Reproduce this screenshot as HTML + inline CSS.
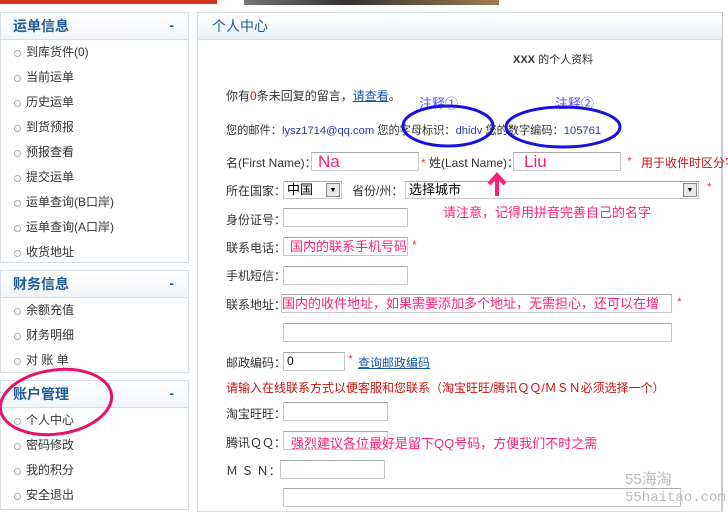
<!DOCTYPE html>
<html><head><meta charset="utf-8"><style>
*{margin:0;padding:0;box-sizing:border-box}
body{width:728px;height:506px;overflow:hidden;background:#fff;position:relative;font-family:"Liberation Sans","Noto Sans CJK SC",sans-serif;font-size:12px;color:#333}
.a{position:absolute;white-space:nowrap}
.panel{position:absolute;left:0;width:189px;border:1px solid #d6dee6;background:#fff}
.ph{height:27px;background:linear-gradient(#fff,#f0f4f8);border-bottom:1px solid #d6dee6;color:#1f5b94;font-weight:bold;font-size:14px;line-height:27px;padding-left:12px;position:relative}
.ph:after{content:"-";position:absolute;right:14px;top:-1px;color:#1f5b94}
.it{height:25px;line-height:25px;padding-left:25px;position:relative;font-size:12px;color:#333}
.it:before{content:"";position:absolute;left:13px;top:10px;width:5px;height:5px;border:1px solid #aaa;border-radius:50%}
.in{position:absolute;border:1px solid #c8c8c8;border-top-color:#a8a8a8;background:#fff;height:19px}
.lb{position:absolute;white-space:nowrap;font-size:12px;color:#333}
.pk{color:#ff1f7a}
</style></head><body>
<div class="a" style="left:0;top:0;width:217px;height:4px;background:#d8341c"></div>
<div class="a" style="left:244px;top:0;width:255px;height:5px;background:linear-gradient(90deg,#777,#333 40%,#a07a50)"></div>

<div class="panel" style="top:12px;height:251px">
<div class="ph">运单信息</div>
<div class="it">到库货件(0)</div><div class="it">当前运单</div><div class="it">历史运单</div><div class="it">到货预报</div><div class="it">预报查看</div><div class="it">提交运单</div><div class="it">运单查询(B口岸)</div><div class="it">运单查询(A口岸)</div><div class="it">收货地址</div>
</div>
<div class="panel" style="top:270px;height:103px">
<div class="ph">财务信息</div>
<div class="it">余额充值</div><div class="it">财务明细</div><div class="it">对 账 单</div>
</div>
<div class="panel" style="top:380px;height:130px">
<div class="ph">账户管理</div>
<div class="it">个人中心</div><div class="it">密码修改</div><div class="it">我的积分</div><div class="it">安全退出</div>
</div>

<div class="a" style="left:197px;top:12px;width:526px;height:500px;border:1px solid #d6dee6;border-right:2px solid #c9c4e0"></div>
<div class="a" style="left:198px;top:13px;width:524px;height:27px;background:linear-gradient(#fff,#e8f0f7);border-bottom:1px solid #d6dee6;color:#1f5b94;font-size:14px;line-height:26px;padding-left:14px">个人中心</div>

<div class="lb" style="left:513px;top:51px;font-size:11px"><b>XXX</b> 的个人资料</div>
<div class="lb" style="left:226px;top:87px">你有<span style="color:red">0</span>条未回复的留言，<span style="color:#1556a8;text-decoration:underline">请查看</span>。</div>
<div class="lb" style="left:419px;top:93px;color:#5a4cff;font-size:13px">注释①</div>
<div class="lb" style="left:555px;top:93px;color:#5a4cff;font-size:13px">注释②</div>
<div class="lb" style="left:226px;top:122px;font-size:11.2px">您的邮件：<span style="color:#2a3aa8">lysz1714@qq.com</span> 您的字母标识：<span style="color:#2a3aa8">dhidv</span> 您的数字编码：<span style="color:#2a3aa8">105761</span></div>

<div class="lb" style="left:226px;top:154px">名(First Name)：</div>
<div class="in" style="left:311px;top:152px;width:108px"><span class="pk" style="font-size:17px;line-height:18px;padding-left:6px">Na</span></div>
<div class="lb" style="left:421px;top:154px"><span style="color:#e44">*</span> 姓(Last Name)：</div>
<div class="in" style="left:513px;top:152px;width:108px"><span class="pk" style="font-size:17px;line-height:18px;padding-left:10px">Liu</span></div>
<div class="lb" style="left:627px;top:154px;color:#e44">*</div>
<div class="lb" style="left:641px;top:154px;color:#d01010">用于收件时区分字</div>

<div class="lb" style="left:226px;top:182px">所在国家：</div>
<div class="in" style="left:283px;top:181px;width:59px;height:18px;font-size:13px;padding-left:3px;line-height:16px;color:#000">中国<span style="position:absolute;right:1px;top:1px;width:14px;height:14px;border:1px solid #888;background:#e8e8e8;font-size:7px;text-align:center;line-height:13px">▼</span></div>
<div class="lb" style="left:352px;top:182px">省份/州：</div>
<div class="in" style="left:405px;top:181px;width:294px;height:18px;font-size:13px;padding-left:3px;line-height:16px;color:#000">选择城市<span style="position:absolute;right:1px;top:1px;width:14px;height:14px;border:1px solid #888;background:#e8e8e8;font-size:7px;text-align:center;line-height:13px">▼</span></div>
<div class="lb" style="left:707px;top:180px;color:#e44">*</div>
<div class="lb pk" style="left:443px;top:202px;font-size:13px">请注意，记得用拼音完善自己的名字</div>

<div class="lb" style="left:226px;top:211px">身份证号：</div>
<div class="in" style="left:283px;top:208px;width:125px"></div>
<div class="lb" style="left:226px;top:239px">联系电话：</div>
<div class="in" style="left:283px;top:237px;width:125px"><span class="pk" style="font-size:13px;line-height:17px;padding-left:6px">国内的联系手机号码</span></div>
<div class="lb" style="left:412px;top:238px;color:#e44">*</div>
<div class="lb" style="left:226px;top:267px">手机短信：</div>
<div class="in" style="left:283px;top:266px;width:125px"></div>
<div class="lb" style="left:226px;top:296px">联系地址：</div>
<div class="in" style="left:281px;top:294px;width:391px;overflow:hidden"><span class="pk" style="font-size:13px;line-height:17px">国内的收件地址，如果需要添加多个地址，无需担心，还可以在增加的</span></div>
<div class="lb" style="left:677px;top:295px;color:#e44">*</div>
<div class="in" style="left:283px;top:323px;width:389px"></div>
<div class="lb" style="left:226px;top:354px">邮政编码：</div>
<div class="in" style="left:283px;top:352px;width:62px;padding-left:3px;line-height:17px;color:#000">0</div>
<div class="lb" style="left:348px;top:352px;color:#e44">*</div>
<div class="lb" style="left:358px;top:354px;color:#1556a8;text-decoration:underline">查询邮政编码</div>
<div class="lb" style="left:226px;top:379px;color:#d01010">请输入在线联系方式以便客服和您联系（淘宝旺旺/腾讯ＱＱ/ＭＳＮ必须选择一个）</div>
<div class="lb" style="left:226px;top:405px">淘宝旺旺：</div>
<div class="in" style="left:283px;top:402px;width:105px"></div>
<div class="lb" style="left:226px;top:434px">腾讯ＱＱ：</div>
<div class="in" style="left:283px;top:431px;width:105px"></div>
<div class="lb pk" style="left:291px;top:433px;font-size:13px">强烈建议各位最好是留下QQ号码，方便我们不时之需</div>
<div class="lb" style="left:226px;top:462px">Ｍ Ｓ Ｎ：</div>
<div class="in" style="left:280px;top:460px;width:105px"></div>
<div class="in" style="left:283px;top:488px;width:398px"></div>
<div class="lb" style="left:625px;top:468px;color:#bbb;font-size:15px">55海淘</div>
<div class="lb" style="left:625px;top:490px;color:#bbb;font-size:14px;font-family:'Liberation Mono',monospace">55haitao.com</div>
<svg class="a" style="left:0;top:0" width="728" height="506"><ellipse cx="448" cy="126" rx="45" ry="20" fill="none" stroke="#1a10e0" stroke-width="3"/><ellipse cx="563" cy="127" rx="57" ry="20" fill="none" stroke="#1a10e0" stroke-width="3"/><ellipse cx="56" cy="402" rx="56" ry="32" fill="none" stroke="#e8106a" stroke-width="3" transform="rotate(-8 56 402)"/><path d="M497 196V176M489 184L497 175L505 184" fill="none" stroke="#ff1f7a" stroke-width="4"/></svg>
</body></html>
